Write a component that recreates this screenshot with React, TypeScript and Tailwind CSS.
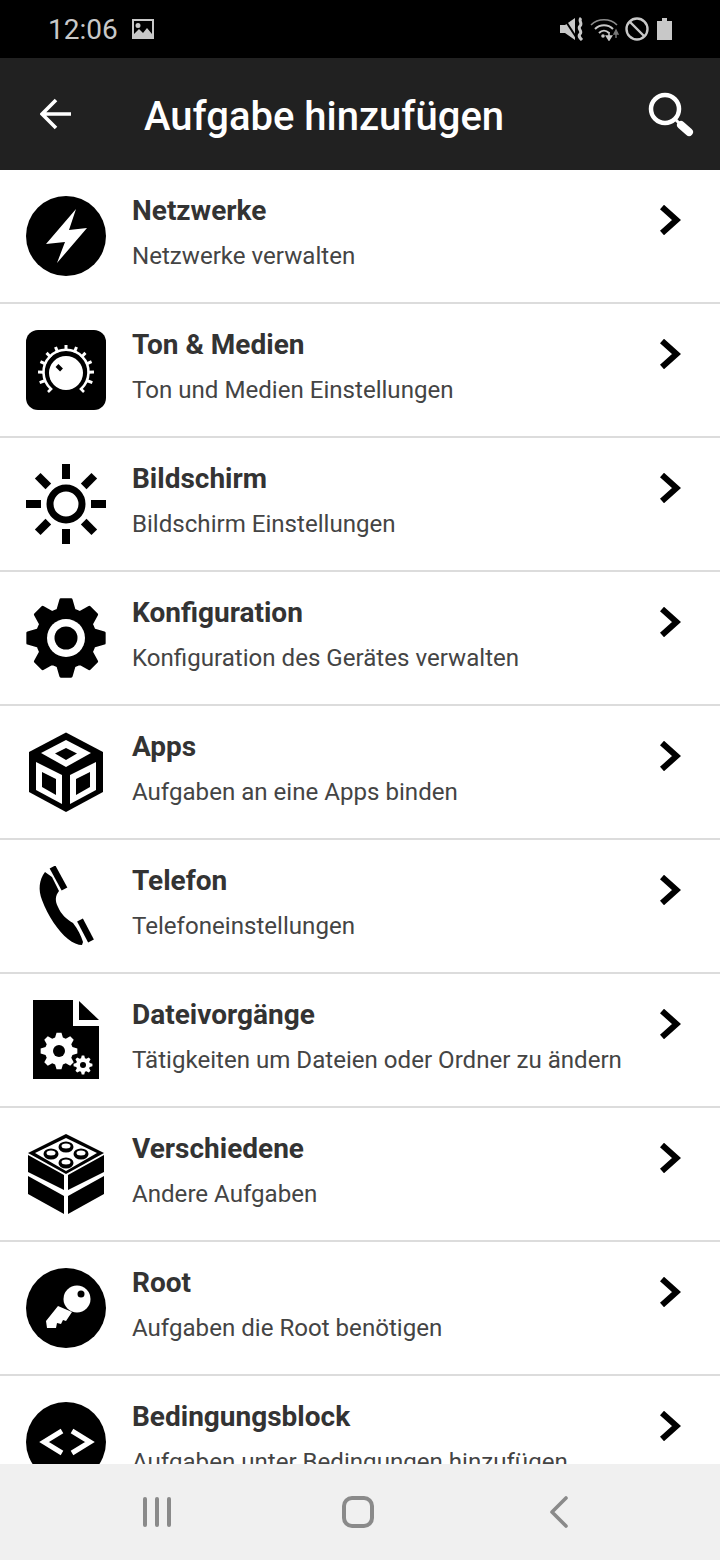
import type { ReactNode } from "react";

function gearPath(cx: number, cy: number, outer: number, inner: number, teeth: number) {
  const pts: string[] = [];
  const step = (Math.PI * 2) / teeth;
  for (let i = 0; i < teeth; i++) {
    const a = -Math.PI / 2 + i * step;
    const corners: [number, number][] = [
      [inner, a - step * 0.36],
      [outer, a - step * 0.17],
      [outer, a + step * 0.17],
      [inner, a + step * 0.36],
    ];
    for (const [r, t] of corners) {
      pts.push(`${(cx + r * Math.cos(t)).toFixed(2)} ${(cy + r * Math.sin(t)).toFixed(2)}`);
    }
  }
  return `M${pts.join("L")}Z`;
}

function Icon({ children }: { children: ReactNode }) {
  return (
    <svg viewBox="0 0 80 80" className="h-20 w-20 shrink-0">
      {children}
    </svg>
  );
}

const BoltIcon = (
  <Icon>
    <circle cx="40" cy="40" r="40" fill="#000" />
    <path d="M50 13L20 48L39 46L31 67L61 32L43 34Z" fill="#fff" />
  </Icon>
);

const KnobIcon = (
  <Icon>
    <rect width="80" height="80" rx="12" fill="#000" />
    <path d="M22 62L25 59A22.5 22.5 0 1 1 55 59L58 62" fill="none" stroke="#fff" strokeWidth="2.6" />
    {Array.from({ length: 11 }).map((_, i) => {
      const a = ((-110 + i * 22) * Math.PI) / 180;
      return (
        <line
          key={i}
          x1={40 + 22 * Math.sin(a)}
          y1={43 - 22 * Math.cos(a)}
          x2={40 + 28 * Math.sin(a)}
          y2={43 - 28 * Math.cos(a)}
          stroke="#fff"
          strokeWidth="3"
        />
      );
    })}
    <circle cx="40" cy="43" r="17" fill="#fff" />
    <line x1="31" y1="35.5" x2="35.5" y2="40" stroke="#000" strokeWidth="4" />
  </Icon>
);

const SunIcon = (
  <Icon>
    <circle cx="40" cy="40" r="16" fill="none" stroke="#000" strokeWidth="7" />
    <g fill="#000">
      <rect x="36" y="0" width="8" height="15" />
      <rect x="36" y="65" width="8" height="15" />
      <rect x="0" y="36" width="15" height="8" />
      <rect x="65" y="36" width="15" height="8" />
      <rect x="36" y="0" width="8" height="15" transform="rotate(45 40 40)" />
      <rect x="36" y="65" width="8" height="15" transform="rotate(45 40 40)" />
      <rect x="0" y="36" width="15" height="8" transform="rotate(45 40 40)" />
      <rect x="65" y="36" width="15" height="8" transform="rotate(45 40 40)" />
    </g>
  </Icon>
);

const GearIcon = (
  <Icon>
    <path d={gearPath(40, 40, 38.5, 29, 8)} fill="#000" stroke="#000" strokeWidth="3" strokeLinejoin="round" />
    <circle cx="40" cy="40" r="19" fill="#fff" />
    <circle cx="40" cy="40" r="11.5" fill="#000" />
  </Icon>
);

const CubeIcon = (
  <Icon>
    <path d="M40 0.5L77 20V60L40 80L3 60V20Z" fill="#000" />
    <path d="M40 8L65 21L40 35L15 21Z" fill="#fff" />
    <path d="M40 16L51 21.5L40 28L29 21.5Z" fill="#000" />
    <path d="M10 30L36 43V72L10 58Z" fill="#fff" />
    <path d="M16 40L30 47V63L16 55Z" fill="#000" />
    <path d="M70 30L44 43V72L70 58Z" fill="#fff" />
    <path d="M64 40L50 47V63L64 55Z" fill="#000" />
  </Icon>
);

const PhoneIcon = (
  <Icon>
    <path
      d="M19 6C13 14 12 24 16 34C22 50 32 65 42 73C47 77 52 79 56 79L57 76C55 70 52 63 47 57C40 53 35 48 32 41C29 35 29 30 33 25L26 11Z"
      fill="#000"
    />
    <line x1="26.5" y1="1" x2="38.5" y2="23" stroke="#000" strokeWidth="6.5" />
    <line x1="54" y1="54" x2="65" y2="75" stroke="#000" strokeWidth="6.5" />
  </Icon>
);

const FileIcon = (
  <Icon>
    <path d="M7 0H47V26H73V79H7Z" fill="#000" />
    <path d="M53 1L73 20H53Z" fill="#000" />
    <path d={gearPath(33, 51, 18.5, 14, 8)} fill="#fff" />
    <circle cx="33" cy="51" r="6" fill="#000" />
    <path d={gearPath(57, 65, 9.5, 7, 8)} fill="#fff" />
    <circle cx="57" cy="65" r="3" fill="#000" />
  </Icon>
);

const BrickIcon = (
  <Icon>
    <path d="M40 0L78 19L40 40L2 19Z" fill="#000" />
    <path d="M40 4L71 19L40 37L9 19Z" fill="#fff" />
    <path d="M2 21L38 41V56L2 38Z" fill="#000" />
    <path d="M78 21L42 41V56L78 38Z" fill="#000" />
    <path d="M2 42L38 62V80L2 60Z" fill="#000" />
    <path d="M78 42L42 62V80L78 60Z" fill="#000" />
    {[
      [40, 13],
      [25, 20],
      [55, 20],
      [40, 29],
    ].map(([x, y]) => (
      <g key={`${x}-${y}`}>
        <ellipse cx={x} cy={y} rx="7.5" ry="5.5" fill="#000" />
        <ellipse cx={x} cy={y - 1} rx="4.5" ry="2.5" fill="#fff" />
      </g>
    ))}
  </Icon>
);

const KeyIcon = (
  <Icon>
    <circle cx="40" cy="40" r="40" fill="#000" />
    <circle cx="51" cy="31" r="13.5" fill="#fff" />
    <circle cx="55" cy="26" r="3.5" fill="#000" />
    <path d="M32 38L20 53L21 60H30L31 55L35 56L37 52L40 53L46 44Z" fill="#fff" />
  </Icon>
);

const CodeIcon = (
  <Icon>
    <circle cx="40" cy="40" r="40" fill="#000" />
    <path d="M36 29L18 40L36 51" fill="none" stroke="#fff" strokeWidth="5" />
    <path d="M46 29L64 40L46 51" fill="none" stroke="#fff" strokeWidth="5" />
  </Icon>
);

const rows = [
  { title: "Netzwerke", sub: "Netzwerke verwalten", icon: BoltIcon },
  { title: "Ton & Medien", sub: "Ton und Medien Einstellungen", icon: KnobIcon },
  { title: "Bildschirm", sub: "Bildschirm Einstellungen", icon: SunIcon },
  { title: "Konfiguration", sub: "Konfiguration des Gerätes verwalten", icon: GearIcon },
  { title: "Apps", sub: "Aufgaben an eine Apps binden", icon: CubeIcon },
  { title: "Telefon", sub: "Telefoneinstellungen", icon: PhoneIcon },
  { title: "Dateivorgänge", sub: "Tätigkeiten um Dateien oder Ordner zu ändern", icon: FileIcon },
  { title: "Verschiedene", sub: "Andere Aufgaben", icon: BrickIcon },
  { title: "Root", sub: "Aufgaben die Root benötigen", icon: KeyIcon },
  { title: "Bedingungsblock", sub: "Aufgaben unter Bedingungen hinzufügen", icon: CodeIcon },
];

function Row({ title, sub, icon }: { title: string; sub: string; icon: ReactNode }) {
  return (
    <div className="flex h-[134px] shrink-0 items-start border-b-2 border-[#dcdcdc] pl-[26px] pr-[39px]">
      <div className="mt-[26px]">{icon}</div>
      <div className="ml-[26px] flex min-w-0 flex-1 flex-col pt-[25px]">
        <div className="text-[28px] leading-8 font-bold text-[#333333]">{title}</div>
        <div className="mt-[13px] text-[24.1px] leading-8 whitespace-nowrap text-[#444444]">{sub}</div>
      </div>
      <svg viewBox="0 0 22 30" className="mt-[35px] h-[30px] w-[22px] shrink-0">
        <path d="M3 2L17.5 15L3 28" fill="none" stroke="#000" strokeWidth="6" />
      </svg>
    </div>
  );
}

function StatusBar() {
  return (
    <div className="flex h-[58px] shrink-0 items-center bg-black pl-[48px] pr-12 text-[#c8c8c8]">
      <span className="mt-[2px] text-[28px] leading-none">12:06</span>
      <svg viewBox="0 0 22 20" className="ml-[14px] h-5 w-[22px]">
        <path
          fillRule="evenodd"
          d="M0 0H22V20H0ZM2 2V15L7 10L11 14L15 9L20 15V2ZM6 4A2.5 2.5 0 1 0 6 9A2.5 2.5 0 1 0 6 4Z"
          fill="#c8c8c8"
        />
      </svg>
      <div className="ml-auto flex items-center">
        <svg viewBox="0 0 24 24" className="h-6 w-6">
          <path d="M0 8H5L15 1V23L5 16H0Z" fill="#c8c8c8" />
          <path d="M3 0L16 20" stroke="#000" strokeWidth="2" />
          <path d="M21 1C18 4 23 6 20 9C17 12 23 14 20 17C18 19 20 21 22 23" fill="none" stroke="#c8c8c8" strokeWidth="3" />
        </svg>
        <svg viewBox="0 0 30 24" className="ml-[6px] h-6 w-[30px]">
          <g fill="none" stroke="#c8c8c8">
            <path d="M1 8C8 1 20 1 27 8" strokeWidth="1.6" opacity="0.7" />
            <path d="M5 12C10 7 18 7 23 12" strokeWidth="2" />
            <path d="M9 16C12 13 16 13 19 16" strokeWidth="2" />
          </g>
          <circle cx="13" cy="19" r="1.8" fill="#c8c8c8" />
          <path d="M19 15V21M16.5 19L19 23L21.5 19Z" stroke="#c8c8c8" strokeWidth="1.6" fill="#c8c8c8" />
          <path d="M26 21V16M24 17L26 13L28 17Z" stroke="#777" strokeWidth="1.4" fill="#777" />
        </svg>
        <svg viewBox="0 0 24 24" className="ml-[5px] h-6 w-6">
          <circle cx="12" cy="12" r="10.5" fill="none" stroke="#c8c8c8" strokeWidth="2.4" />
          <path d="M4.5 4.5L19.5 19.5" stroke="#c8c8c8" strokeWidth="2.4" />
        </svg>
        <svg viewBox="0 0 15 22" className="ml-2 h-[22px] w-[15px]">
          <path d="M5 0H10V3H15V22H0V3H5Z" fill="#c8c8c8" />
        </svg>
      </div>
    </div>
  );
}

function Header() {
  return (
    <div className="flex h-28 shrink-0 items-center bg-[#212121] pl-10 pr-[26px] text-white">
      <svg viewBox="0 0 32 32" className="h-8 w-8 shrink-0">
        <path d="M31 16H3M16 2L2 16L16 30" fill="none" stroke="#fff" strokeWidth="3.6" />
      </svg>
      <h1 className="ml-[72px] mt-[6px] text-[40px] leading-none font-medium">Aufgabe hinzufügen</h1>
      <svg viewBox="0 0 46 46" className="ml-auto mt-[2px] h-[46px] w-[46px] shrink-0">
        <circle cx="17" cy="17" r="14" fill="none" stroke="#fff" strokeWidth="4.5" />
        <path d="M28 28L33 33" stroke="#fff" strokeWidth="3" />
        <path d="M33 33L41 40" stroke="#fff" strokeWidth="8" strokeLinecap="round" />
      </svg>
    </div>
  );
}

function NavBar() {
  return (
    <div className="grid h-24 shrink-0 grid-cols-3 items-center bg-[#f0f0f0] pl-[57px] pr-[61px]">
      <div className="flex justify-center gap-2">
        <span className="h-[30px] w-1 rounded-full bg-[#8a8a8a]" />
        <span className="h-[30px] w-1 rounded-full bg-[#8a8a8a]" />
        <span className="h-[30px] w-1 rounded-full bg-[#8a8a8a]" />
      </div>
      <div className="flex justify-center">
        <span className="h-8 w-8 rounded-[10px] border-[4px] border-[#8a8a8a]" />
      </div>
      <div className="flex justify-center">
        <svg viewBox="0 0 20 32" className="h-8 w-5">
          <path d="M17 2L3 16L17 30" fill="none" stroke="#8a8a8a" strokeWidth="3.6" strokeLinecap="round" strokeLinejoin="round" />
        </svg>
      </div>
    </div>
  );
}

export default function App() {
  return (
    <div className="flex h-[1560px] w-[720px] flex-col overflow-hidden bg-white font-['Roboto',sans-serif]">
      <StatusBar />
      <Header />
      <div className="flex min-h-0 flex-1 flex-col overflow-hidden">
        {rows.map((r) => (
          <Row key={r.title} title={r.title} sub={r.sub} icon={r.icon} />
        ))}
      </div>
      <NavBar />
    </div>
  );
}
